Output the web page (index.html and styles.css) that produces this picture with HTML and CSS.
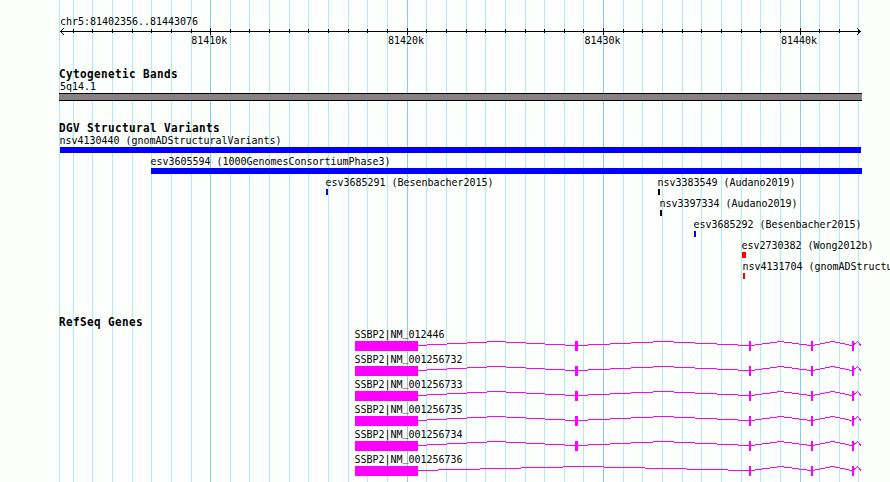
FILE: index.html
```
<!DOCTYPE html>
<html lang="en">
<head>
<meta charset="utf-8">
<title>chr5:81402356..81443076</title>
<link rel="stylesheet" href="styles.css">
</head>
<body>
<main class="browser">
  <svg class="grid" width="890" height="482" aria-hidden="true">
    <path class="minor" d="M59.5 0V482M73.5 0V482M92.5 0V482M112.5 0V482M132.5 0V482M151.5 0V482M171.5 0V482M191.5 0V482M230.5 0V482M249.5 0V482M269.5 0V482M289.5 0V482M308.5 0V482M328.5 0V482M348.5 0V482M367.5 0V482M387.5 0V482M426.5 0V482M446.5 0V482M466.5 0V482M485.5 0V482M505.5 0V482M525.5 0V482M544.5 0V482M564.5 0V482M583.5 0V482M623.5 0V482M642.5 0V482M662.5 0V482M682.5 0V482M701.5 0V482M721.5 0V482M741.5 0V482M760.5 0V482M780.5 0V482M819.5 0V482M839.5 0V482M858.5 0V482"/>
    <path class="major" d="M210.5 0V482M407.5 0V482M603.5 0V482M800.5 0V482"/>
  </svg>

  <header class="ruler">
    <div class="region"><span class="label">chr5:81402356..81443076</span></div>
    <svg class="axis" width="890" height="7" aria-hidden="true">
      <path d="M60 3.5H861M73.5 1V5M92.5 1V5M112.5 1V5M132.5 1V5M151.5 1V5M171.5 1V5M191.5 1V5M210.5 0V7M230.5 1V5M249.5 1V5M269.5 1V5M289.5 1V5M308.5 1V5M328.5 1V5M348.5 1V5M367.5 1V5M387.5 1V5M407.5 0V7M426.5 1V5M446.5 1V5M466.5 1V5M485.5 1V5M505.5 1V5M525.5 1V5M544.5 1V5M564.5 1V5M583.5 1V5M603.5 0V7M623.5 1V5M642.5 1V5M662.5 1V5M682.5 1V5M701.5 1V5M721.5 1V5M741.5 1V5M760.5 1V5M780.5 1V5M800.5 0V7M819.5 1V5M839.5 1V5M858.5 1V5"/>
      <path d="M63.8 .2L60.5 3.5L63.8 6.8M857.2 .2L860.5 3.5L857.2 6.8"/>
    </svg>
    <div class="ticks">
      <span class="label">81410k</span><span class="label">81420k</span><span class="label">81430k</span><span class="label">81440k</span>
    </div>
  </header>

  <section class="track cytoband">
    <h2><span>Cytogenetic Bands</span></h2>
    <div class="region"><span class="label">5q14.1</span></div>
    <div class="band"></div>
  </section>

  <section class="track variants">
    <h2><span>DGV Structural Variants</span></h2>
    <div class="row"><div class="feature v1"><span class="label">nsv4130440 (gnomADStructuralVariants)</span><i></i></div></div>
    <div class="row"><div class="feature v2"><span class="label">esv3605594 (1000GenomesConsortiumPhase3)</span><i></i></div></div>
    <div class="row">
      <div class="feature v3"><span class="label">esv3685291 (Besenbacher2015)</span><i></i></div>
      <div class="feature v4"><span class="label">nsv3383549 (Audano2019)</span><i></i></div>
    </div>
    <div class="row"><div class="feature v5"><span class="label">nsv3397334 (Audano2019)</span><i></i></div></div>
    <div class="row"><div class="feature v6"><span class="label">esv3685292 (Besenbacher2015)</span><i></i></div></div>
    <div class="row"><div class="feature v7"><span class="label">esv2730382 (Wong2012b)</span><i></i></div></div>
    <div class="row"><div class="feature v8"><span class="label">nsv4131704 (gnomADStructuralVariants)</span><i></i></div></div>
  </section>

  <section class="track genes">
    <h2><span>RefSeq Genes</span></h2>
    <svg class="defs" width="0" height="0" aria-hidden="true">
      <defs>
        <g id="tail">
          <path class="exon" d="M394 0h2v10h-2zM456 0h2v10h-2zM497 0h2v10h-2z"/>
          <path class="intron" d="M396 4.5H400M400 3.5H407M407 2.5H415M415 1.5H422M422 .5H429M429 1.5H437M437 2.5H444M444 3.5H452M452 4.5H456M458 4.5H460M460 3.5H465M465 2.5H470M470 1.5H475M475 .5H480M480 1.5H485M485 2.5H490M490 3.5H494M494 4.5H497M499 3.5L502.5 .5L506 4.5"/>
        </g>
        <g id="gene">
          <path class="exon" d="M0 0h63v10H0zM220 0h3v10h-3z"/>
          <path class="intron" d="M63 4.5H72M72 3.5H92M92 2.5H112M112 1.5H132M132 .5H151M151 1.5H171M171 2.5H190M190 3.5H210M210 4.5H220M223 4.5H233M233 3.5H255M255 2.5H276M276 1.5H298M298 .5H319M319 1.5H340M340 2.5H362M362 3.5H383M383 4.5H394"/>
          <use href="#tail"/>
        </g>
        <g id="gene-long">
          <path class="exon" d="M0 0h63v10H0z"/>
          <path class="intron" d="M63 4.5H83M83 3.5H125M125 2.5H166M166 1.5H208M208 .5H249M249 1.5H290M290 2.5H332M332 3.5H373M373 4.5H394"/>
          <use href="#tail"/>
        </g>
      </defs>
    </svg>
    <div class="gene"><span class="label">SSBP2|NM<span class="raised">_</span>012446</span><svg width="507" height="10"><use href="#gene"/></svg></div>
    <div class="gene"><span class="label">SSBP2|NM<span class="raised">_</span>001256732</span><svg width="507" height="10"><use href="#gene"/></svg></div>
    <div class="gene"><span class="label">SSBP2|NM<span class="raised">_</span>001256733</span><svg width="507" height="10"><use href="#gene"/></svg></div>
    <div class="gene"><span class="label">SSBP2|NM<span class="raised">_</span>001256735</span><svg width="507" height="10"><use href="#gene"/></svg></div>
    <div class="gene"><span class="label">SSBP2|NM<span class="raised">_</span>001256734</span><svg width="507" height="10"><use href="#gene"/></svg></div>
    <div class="gene"><span class="label">SSBP2|NM<span class="raised">_</span>001256736</span><svg width="507" height="10"><use href="#gene-long"/></svg></div>
  </section>
</main>
</body>
</html>
```
FILE: styles.css
```
body {
  margin: 0;
  background: #fdfffd;
  color: #000;
  font-family: "DejaVu Sans Mono", monospace;
}

.browser {
  position: relative;
  isolation: isolate;
  box-sizing: border-box;
  width: 890px;
  height: 482px;
  padding-top: 16px;
  overflow: hidden;
}

svg {
  display: block;
  shape-rendering: crispEdges;
}

/* Grid lines run behind every track */
.grid {
  position: absolute;
  inset: 0;
  z-index: -1;
}
.minor { stroke: #afeeee; }
.major { stroke: #87ceeb; }

/* Lettering on a 6px advance */
.label {
  display: block;
  height: 12px;
  font-size: 10px;
  letter-spacing: -.02px;
  line-height: 12px;
  white-space: pre;
  transform: scaleY(1.07);
  transform-origin: 0 9px;
}

/* Keeps the underscore clear of the exon below it */
.raised {
  position: relative;
  top: -2px;
}

.region { padding-left: 60px; }

.axis path {
  fill: none;
  stroke: #000;
}

.ticks {
  display: grid;
  grid-template-columns: repeat(4, 196.6px);
  padding-left: 191.3px;
}

.track { margin-top: 21px; }
.genes { margin-top: 34px; }

h2 {
  height: 13px;
  margin: 0;
  padding-left: 59px;
  font-size: 11px;
  letter-spacing: .377px;
  line-height: 13px;
  white-space: pre;
}
h2 span {
  display: inline-block;
  transform: scaleY(1.08);
  transform-origin: 0 10px;
}

.band {
  box-sizing: border-box;
  width: 803px;
  height: 8px;
  margin-left: 59px;
  border: solid #000;
  border-width: 1px 0;
  background: #868286;
}

.row {
  display: flex;
  height: 21px;
}
.feature { flex: none; }
.feature i {
  display: block;
  width: 2px;
  height: 6px;
  background: #00f;
}

.v1 { margin-left: 60px; }
.v1 i { width: 801px; }
.v2 { margin-left: 151px; }
.v2 i { width: 711px; }
.v3 { width: 332px; margin-left: 326px; }
.v4 i, .v5 i { background: #000; }
.v5 { margin-left: 660px; }
.v6 { margin-left: 694px; }
.v7 { margin-left: 742px; }
.v7 i { width: 4px; background: #f00; }
.v8 { margin-left: 743px; }
.v8 i { background: #f00; }

.feature .label,
.gene .label { margin-left: -.5px; }

.gene {
  height: 25px;
  padding-left: 355px;
}
.defs { position: absolute; }
.exon { fill: #f0f; }
.intron {
  fill: none;
  stroke: #f0f;
}
```
